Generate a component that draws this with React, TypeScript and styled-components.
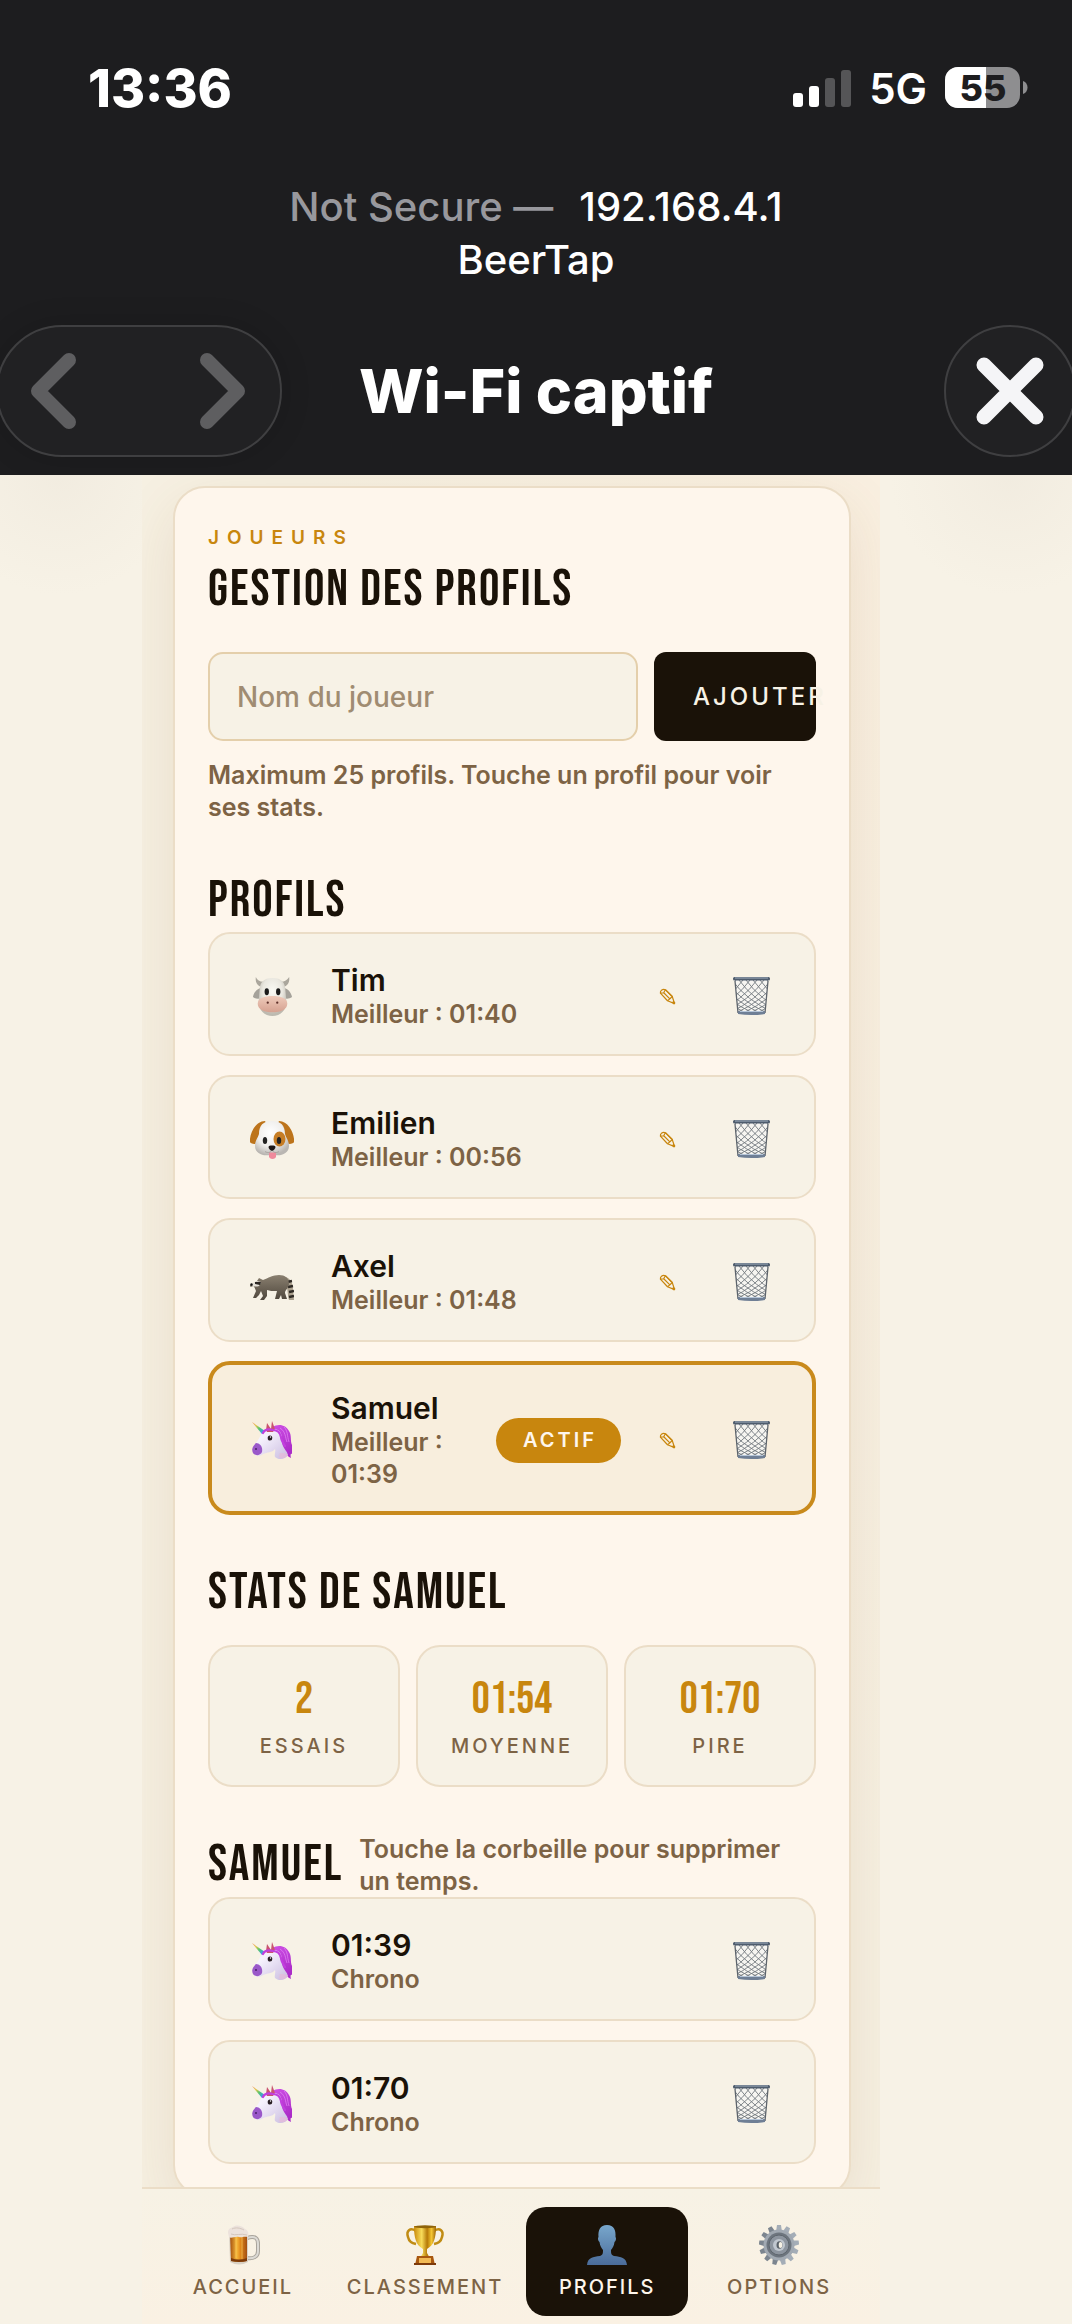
import React, { useState } from 'react';
import styled, { createGlobalStyle } from 'styled-components';

const GlobalStyle = createGlobalStyle`
  :root {
    --ink: #1a1208;
    --brown: #7d6345;
    --gold: #c8860e;
    --cream: #f7f2e6;
    --paper: #fef6ec;
    --line: #ebddc7;
    --chrome: #1d1d1f;
  }

  * {
    box-sizing: border-box;
  }

  body {
    margin: 0;
    background: var(--cream);
    color: var(--ink);
    font-family: Inter, 'Liberation Sans', sans-serif;
  }

  h1, h2, p, ul {
    margin: 0;
    padding: 0;
  }

  button {
    border: 0;
    background: none;
    padding: 0;
    font-family: inherit;
    cursor: pointer;
  }
`;

/* ---------- phone chrome ---------- */

const Chrome = styled.header`
  background: var(--chrome);
  color: #fff;
  padding: 58px 0 18px;
  overflow: hidden;
`;

const StatusBar = styled.div`
  display: flex;
  align-items: center;
  justify-content: space-between;
  height: 60px;
  padding: 0 44px 0 88px;
`;

const Clock = styled.time`
  font-size: 52px;
  font-weight: 800;
`;

const Indicators = styled.div`
  display: flex;
  align-items: center;
  gap: 18px;
  font-size: 42px;
  font-weight: 600;
`;

const Address = styled.div`
  margin-top: 62px;
  font-size: 40px;
  line-height: 53px;
  font-weight: 500;
  text-align: center;

  span {
    color: #98989d;
    margin-right: 26px;
  }
`;

const Toolbar = styled.div`
  display: grid;
  grid-template-columns: 286px 1fr 286px;
  align-items: center;
  margin: 39px -4px 0;
`;

const NavPill = styled.div`
  display: flex;
  align-items: center;
  justify-content: space-between;
  height: 132px;
  padding: 0 34px 0 32px;
  border: 2px solid #3f3f41;
  border-radius: 66px;
  background: #212123;
  box-shadow: 0 0 30px rgba(0, 0, 0, 0.15);

  button {
    display: flex;
  }
`;

const CloseButton = styled.button`
  display: flex;
  align-items: center;
  justify-content: center;
  justify-self: end;
  width: 132px;
  height: 132px;
  border: 2px solid #3f3f41;
  border-radius: 50%;
  background: #212123;
`;

const Title = styled.p`
  text-align: center;
  font-size: 61px;
  line-height: 80px;
  font-weight: 800;
  white-space: nowrap;
`;

/* ---------- page ---------- */

const Page = styled.div`
  padding-right: 50px;
  background:
    radial-gradient(circle 120px at 60px 0, rgba(238, 232, 220, 0.6), rgba(247, 242, 230, 0)),
    radial-gradient(circle 120px at calc(100% - 62px) 0, rgba(238, 232, 220, 0.6), rgba(247, 242, 230, 0));
`;

const Column = styled.div`
  width: 100%;
  max-width: 738px;
  margin: 0 auto;
  overflow: hidden;
  background: linear-gradient(to top right, #f6f0e2 60%, #f9efe0);
`;

const Card = styled.main`
  margin: 11px 29px 0 31px;
  padding: 38px 33px 31px;
  border: 2px solid var(--line);
  border-radius: 32px;
  background: var(--paper);
  box-shadow: 0 20px 60px rgba(139, 94, 30, 0.12);
`;

const Eyebrow = styled.p`
  font-size: 19px;
  line-height: 24px;
  font-weight: 600;
  letter-spacing: 8px;
  color: var(--gold);
  text-transform: uppercase;
`;

const displayFont = `'Bebas Neue', Oswald, 'Liberation Sans Narrow', sans-serif`;

const Heading = styled.h2`
  font-family: ${displayFont};
  font-size: 51px;
  line-height: 56px;
  font-weight: 400;
  letter-spacing: 2px;
  text-transform: uppercase;
  white-space: nowrap;
`;

const PageHeading = styled(Heading)`
  margin-top: 12px;
`;

const AddForm = styled.form`
  display: flex;
  gap: 16px;
  margin-top: 34px;
`;

const NameInput = styled.input`
  flex: 1;
  min-width: 0;
  height: 89px;
  padding: 0 27px;
  border: 2px solid #e4cfab;
  border-radius: 15px;
  background: var(--cream);
  color: var(--ink);
  font: 500 28px Inter, sans-serif;
  outline: none;

  &::placeholder {
    color: #a08c72;
    opacity: 1;
  }
`;

const AddButton = styled.button`
  width: 162px;
  height: 89px;
  padding-left: 39px;
  border-radius: 12px;
  background: var(--ink);
  color: var(--cream);
  font-size: 24px;
  font-weight: 500;
  letter-spacing: 3px;
  text-align: left;
  text-transform: uppercase;
`;

const Hint = styled.p`
  font-size: 25px;
  line-height: 32px;
  font-weight: 600;
  color: var(--brown);
`;

const FormHint = styled(Hint)`
  margin-top: 18px;
`;

const Section = styled.section`
  margin-top: 50px;
`;

const List = styled.ul`
  display: flex;
  flex-direction: column;
  gap: 19px;
  list-style: none;
`;

const ProfileList = styled(List)`
  margin-top: 3px;
`;

const Row = styled.li<{ $active?: boolean }>`
  display: flex;
  align-items: center;
  gap: 14px;
  padding: ${({ $active }) => ($active ? '25px 26px 21px 15px' : '28px 28px 24px 17px')};
  border: ${({ $active }) => ($active ? '4px solid #c98a1c' : '2px solid var(--line)')};
  border-radius: 22px;
  background: ${({ $active }) => ($active ? '#f8eedd' : 'var(--cream)')};
`;

const Avatar = styled.span`
  display: flex;
  justify-content: center;
  flex: 0 0 90px;
`;

const RowText = styled.div`
  flex: 1;
  min-width: 0;
`;

const RowTitle = styled.p`
  font-size: 30px;
  line-height: 36px;
  font-weight: 600;
`;

const Badge = styled.span`
  margin-right: -3px;
  padding: 0 24px 0 27px;
  border-radius: 23px;
  background: var(--gold);
  color: var(--paper);
  font-size: 20px;
  line-height: 45px;
  font-weight: 600;
  letter-spacing: 3px;
`;

const IconButton = styled.button`
  display: flex;
  align-items: center;
  justify-content: center;
  flex: 0 0 70px;
  height: 66px;
  color: var(--gold);
`;

const Stats = styled.div`
  display: grid;
  grid-template-columns: repeat(3, 1fr);
  gap: 16px;
  margin-top: 24px;
`;

const Stat = styled.div`
  display: flex;
  flex-direction: column;
  align-items: center;
  gap: 14px;
  padding: 33px 0 27px;
  border: 2px solid var(--line);
  border-radius: 24px;
  background: var(--cream);

  strong {
    font-family: ${displayFont};
    font-size: 45px;
    line-height: 40px;
    font-weight: 400;
    color: var(--gold);
  }

  span {
    font-size: 20px;
    line-height: 24px;
    font-weight: 550;
    letter-spacing: 3px;
    color: var(--brown);
    text-transform: uppercase;
  }
`;

const TimesSection = styled.section`
  margin-top: 46px;
`;

const TimesHeader = styled.div`
  display: flex;
  align-items: center;
  gap: 16px;
`;

/* ---------- bottom tabs ---------- */

const TabBar = styled.nav`
  position: relative;
  display: grid;
  grid-template-columns: 1fr auto 1fr 1fr;
  gap: 10px;
  margin-top: -10px;
  padding: 18px 20px 8px;
  border-top: 2px solid var(--line);
  background: linear-gradient(#f7f2e5, #faf1e3);
`;

const Tab = styled.a<{ $active?: boolean }>`
  display: flex;
  flex-direction: column;
  align-items: center;
  gap: 10px;
  padding: 18px 13px 17px;
  border-radius: 20px;
  background: ${({ $active }) => ($active ? 'var(--ink)' : 'transparent')};
  color: ${({ $active }) => ($active ? 'var(--paper)' : 'var(--brown)')};
  font-size: 20px;
  line-height: 24px;
  font-weight: 550;
  letter-spacing: 2px;
  text-decoration: none;
  text-transform: uppercase;
`;

/* ---------- icons ---------- */

const SignalIcon = () => (
  <svg width='58' height='37' viewBox='0 0 58 37' fill='#fff'>
    <rect x='0' y='23' width='10' height='14' rx='3' />
    <rect x='16' y='16' width='10' height='21' rx='3' />
    <rect x='32' y='8' width='10' height='29' rx='3' opacity='.25' />
    <rect x='48' y='0' width='10' height='37' rx='3' opacity='.25' />
  </svg>
);

const BatteryIcon = () => (
  <svg width='83' height='42' viewBox='0 0 83 42'>
    <clipPath id='cell'>
      <rect width='75' height='41' rx='13' />
    </clipPath>
    <g clipPath='url(#cell)'>
      <rect width='75' height='41' fill='#8e8e90' />
      <rect width='41' height='41' fill='#fff' />
    </g>
    <path d='M78 14c6 2 6 11 0 13z' fill='#8e8e90' />
    <text x='38' y='34' textAnchor='middle' fontFamily='Inter' fontWeight='800' fontSize='36' fill='#1d1d1f'>
      55
    </text>
  </svg>
);

const Chevron = ({ flip }: { flip?: boolean }) => (
  <svg width='46' height='76' viewBox='0 0 46 76'>
    <path
      d={flip ? 'M7 7L38 38L7 69' : 'M39 7L8 38L39 69'}
      fill='none'
      stroke='#5e5e60'
      strokeWidth='14'
      strokeLinecap='round'
      strokeLinejoin='round'
    />
  </svg>
);

const CloseIcon = () => (
  <svg width='68' height='68' viewBox='0 0 68 68'>
    <path d='M8 8L60 60M60 8L8 60' stroke='#f5f5f7' strokeWidth='15' strokeLinecap='round' />
  </svg>
);

const CowIcon = () => (
  <svg width='41' height='41' viewBox='1 2 43 43'>
    <defs>
      <radialGradient id='cowFace' cx='.5' cy='.35' r='.6'>
        <stop offset='0' stopColor='#fafaf5' />
        <stop offset='.6' stopColor='#e9e7df' />
        <stop offset='1' stopColor='#bdbab0' />
      </radialGradient>
      <linearGradient id='cowNose' x2='0' y2='1'>
        <stop offset='0' stopColor='#efcbbb' />
        <stop offset='1' stopColor='#d5a190' />
      </linearGradient>
    </defs>
    <path d='M5 3c-1 7 3 11 10 11l4-8C13 10 7 8 5 3zM40 3c1 7-3 11-10 11l-4-8c5 4 11 2 14-3z' fill='#aaa69c' />
    <path d='M13 14C8 14 3 18 2 24c4 3 9 2 11-1zM32 14c5 0 10 4 11 10-4 3-9 2-11-1z' fill='#a5a29a' />
    <path
      d='M22.500 4C13 4 9 9 9 17l-1 12c0 9 6 15 14.500 15S37 38 37 29l-1-12c0-8-4-13-13.500-13z'
      fill='url(#cowFace)'
    />
    <path d='M7 31c0-6 7-8 15.500-8S38 25 38 31s-7 9-15.500 9S7 37 7 31z' fill='url(#cowNose)' />
    <ellipse cx='16.500' cy='18.500' rx='2.300' ry='3.600' fill='#1b1b1b' />
    <ellipse cx='28.500' cy='18.500' rx='2.300' ry='3.600' fill='#1b1b1b' />
    <circle cx='17.500' cy='30' r='1.200' fill='#5d2f29' />
    <circle cx='27.500' cy='30' r='1.200' fill='#5d2f29' />
  </svg>
);

const DogIcon = () => (
  <svg width='44' height='39' viewBox='0 2 44 42' preserveAspectRatio='none'>
    <defs>
      <radialGradient id='dogFace' cx='.45' cy='.35' r='.65'>
        <stop offset='0' stopColor='#fff' />
        <stop offset='.6' stopColor='#efeeec' />
        <stop offset='1' stopColor='#b9b6b2' />
      </radialGradient>
    </defs>
    <path d='M15 3C5 3-1 18 0 26c3 3 7 2 9-1l8-18zM29 3c10 0 16 15 15 23-3 3-7 2-9-1L27 7z' fill='#bd741b' />
    <path
      d='M22 3C13 3 9 8 9 17c-1 4-4 7-4 13 0 7 6 10 11 10h12c5 0 11-3 11-10 0-6-3-9-4-13C35 8 31 3 22 3z'
      fill='url(#dogFace)'
    />
    <ellipse cx='29.500' cy='22.500' rx='6' ry='8' fill='#c67d25' />
    <ellipse cx='15' cy='24' rx='2.200' ry='3.800' fill='#222' />
    <ellipse cx='29' cy='24' rx='2.200' ry='3.800' fill='#222' />
    <path d='M19 37h7v4c0 4-7 4-7 0z' fill='#ef8a9c' />
    <path d='M15 36c3 2 6 1 7-2 1 3 4 4 7 2' fill='none' stroke='#a09a95' strokeWidth='.8' />
    <path d='M18.500 31c0-2 7-2 7 0 0 2-2 4-3.500 4s-3.500-2-3.500-4z' fill='#1c1717' />
  </svg>
);

const RaccoonIcon = () => (
  <svg width='44' height='44' viewBox='0 2 44 44'>
    <defs>
      <linearGradient id='fur' x2='0' y2='1'>
        <stop offset='0' stopColor='#8a8070' />
        <stop offset='1' stopColor='#4f473d' />
      </linearGradient>
    </defs>
    <path d='M36 19c5 2 7 7 7 13l1 10h-5c-2-5 0-12-5-18z' fill='#aaa08e' />
    <path d='M37 24l5-1M38 29l5-1M39 34l5-1M39 39l5-1' stroke='#2f2a25' strokeWidth='2.400' />
    <path
      d='M1 27l6-4 2-3 4 2c5-2 10-5 16-5 6 0 10 3 10 9-1 5-4 6-4 9l2 6h-5l-1-4-2 4h-4l2-8c-5 0-7 0-10-1l0 6-3 4h-4l3-4-2-5-2 4-3 3h-3l3-7c-1-3-2-5-3-5-1 1-4 1-5-1z'
      fill='url(#fur)'
    />
    <path d='M1 26l6-3 4 1-2 4c-3 1-6 1-8-2z' fill='#e5e1d8' />
    <path d='M5 24h6l-1 3-5-1z' fill='#2b2622' />
    <circle cx='1.500' cy='26.500' r='1.200' fill='#111' />
  </svg>
);

const UnicornIcon = () => (
  <svg width='41' height='39' viewBox='0 0 41 39'>
    <defs>
      <linearGradient id='horn' x2='1' y2='1'>
        <stop offset='0' stopColor='#ef8b5c' />
        <stop offset='.3' stopColor='#e3c64c' />
        <stop offset='.55' stopColor='#58c46c' />
        <stop offset='.8' stopColor='#3f9fe0' />
        <stop offset='1' stopColor='#6b6be0' />
      </linearGradient>
      <linearGradient id='coat' x2='1' y2='1'>
        <stop offset='.3' stopColor='#f6f2fd' />
        <stop offset='1' stopColor='#c9bbdf' />
      </linearGradient>
      <linearGradient id='mane' x2='.4' y2='1'>
        <stop offset='0' stopColor='#cf50e6' />
        <stop offset='1' stopColor='#ab2cc8' />
      </linearGradient>
    </defs>
    <path d='M20 6c7-4 14-2 17 4 3 5 1 9 3 14v9c-1-1-2 0-1 4-3-1-4-3-5-5L24 18z' fill='url(#mane)' />
    <path
      d='M11 11c4-5 13-5 17 0 3 4 1 9 3 14 1 3 4 5 5 9-3 5-10 5-13 2-1-3 1-5 0-8-3 4-8 3-12 5-3 3-8 2-10-2-1-3 0-6 3-9 3-4 4-7 7-11z'
      fill='url(#coat)'
    />
    <path d='M4 22c4 0 7 4 6 9-2 4-7 4-9 1-2-4 0-7 3-10z' fill='#9a58c9' />
    <circle cx='4' cy='28' r='1' fill='#4a2068' />
    <path d='M0 1L13 10L10 13z' fill='url(#horn)' />
    <path d='M14 9L15 2L19 8L20 0L23 8L21 11L15 11z' fill='#c9536f' />
    <path d='M11 12c2-4 6-4 10-3 4 0 7 2 8 7 0 3 2 6 4 9' fill='none' stroke='#c23fde' strokeWidth='2.200' strokeLinecap='round' />
    <path d='M28 7c6 4 5 9 7 14M32 6c4 4 3 9 5 15' fill='none' stroke='#e48af5' strokeWidth='.7' />
    <ellipse cx='18' cy='17' rx='2.300' ry='2.600' fill='#281d23' />
    <circle cx='18.500' cy='16' r='.7' fill='#fff' />
    <path d='M28 32c3 0 6 0 8 2-3 4-7 4-9 2z' fill='#e7bbd8' opacity='.7' />
  </svg>
);

const TrashIcon = () => (
  <svg width='37' height='38' viewBox='0 0 37 38'>
    <clipPath id='basket'>
      <path d='M2 3H35L32 36H5z' />
    </clipPath>
    <path d='M2 3H35L32 36H5z' fill='#f6f5f1' />
    <g clipPath='url(#basket)' stroke='#73797f' strokeWidth='.9' fill='none'>
      {[-36, -29, -22, -15, -8, -1, 6, 13, 20, 27, 34].map((x) => (
        <path key={x} d={`M${x} 3q14 20 42 33M${37 - x} 3q-14 20-42 33`} />
      ))}
    </g>
    <path d='M2 4L5 36M35 4L32 36' stroke='#5d646c' strokeWidth='1.300' />
    <path d='M5 34Q18 36 32 34V37Q18 39 5 37z' fill='#6f7f95' />
    <path d='M7 34.500H30' stroke='#b5c5d8' />
    <rect x='0' y='0' width='37' height='3.500' rx='1.500' fill='#4e5c6d' />
    <path d='M2 1H35' stroke='#a4b2c2' />
  </svg>
);

const PencilIcon = () => (
  <svg width='17' height='17' viewBox='0 0 18 18' fill='none' stroke='currentColor' strokeWidth='1.300' strokeLinejoin='round'>
    <path d='M1.500 5.500C1 2.500 4 .5 7 2L14 9L16.500 16.500L9 13.500z' />
    <path d='M5 5L11.500 11.500M7 2L14 9L11.500 11.500L9 13.500M1.500 5.500C3 5.500 5 5 5 5C5.500 4 6 3 7 2' />
    <path d='M14.500 14.500L16.500 16.500' strokeWidth='2.500' />
  </svg>
);

const BeerIcon = () => (
  <svg width='40' height='40' viewBox='0 0 40 40'>
    <defs>
      <linearGradient id='beer'>
        <stop offset='0' stopColor='#a5500f' />
        <stop offset='.4' stopColor='#f6b73a' />
        <stop offset='.6' stopColor='#e38b1c' />
        <stop offset='1' stopColor='#a34f12' />
      </linearGradient>
    </defs>
    <path d='M24 13c9-3 11 1 11 6v7c0 6-5 8-11 7' fill='none' stroke='#a9a49c' strokeWidth='4' />
    <path d='M24 13c9-3 11 1 11 6v7c0 6-5 8-11 7' fill='none' stroke='#dcdad5' strokeWidth='2' />
    <path d='M6 8H25V37Q16 42 7 37z' fill='#d9d1c5' />
    <path d='M7 9H24V36Q16 38 8 36z' fill='url(#beer)' />
    <path d='M8 33Q16 36 24 33V36Q16 38 8 36z' fill='#7c3a0a' />
    <path d='M13 12V33M19 12V34' stroke='#ffd568' opacity='.6' />
    <path d='M5 8C5 3 8 3 10 2c4-3 9-1 12 2 3 1 4 4 3 8-5-1-6 1-9 0-4-1-8 2-10 0z' fill='#ece2dc' />
    <path d='M8 9c4 2 10-1 16 1M9 4c4-2 8-1 12 1' fill='none' stroke='#d4c7bd' />
  </svg>
);

const TrophyIcon = () => (
  <svg width='40' height='40' viewBox='0 0 40 40'>
    <defs>
      <linearGradient id='gold'>
        <stop offset='0' stopColor='#c98a0c' />
        <stop offset='.35' stopColor='#f8dc5a' />
        <stop offset='.6' stopColor='#b67a08' />
        <stop offset='.8' stopColor='#f5c633' />
        <stop offset='1' stopColor='#9c6204' />
      </linearGradient>
    </defs>
    <path
      d='M11 6C5 2 1 6 3 12c1 5 4 6 8 7M29 6c6-4 10 0 8 6-1 5-4 6-8 7'
      fill='none'
      stroke='#c08c14'
      strokeWidth='2.500'
    />
    <path d='M9 1H31C31 13 29 20 22 24V28L25 33H15L18 28V24C11 20 9 13 9 1z' fill='url(#gold)' />
    <ellipse cx='20' cy='1.800' rx='11' ry='1.500' fill='#8f6308' />
    <path d='M12 31H28L30 40H10z' fill='#a8570f' />
    <path d='M14 33H26V38H14z' fill='#f2ba55' />
    <path d='M9 39H31' stroke='#7d3a0a' strokeWidth='2' />
  </svg>
);

const BustIcon = () => (
  <svg width='40' height='40' viewBox='0 0 40 40'>
    <defs>
      <linearGradient id='bust' x2='0' y2='1'>
        <stop offset='0' stopColor='#78a7cc' />
        <stop offset='1' stopColor='#4b6c9a' />
      </linearGradient>
    </defs>
    <path
      d='M20 0C13 0 11 5 11.500 12c-1 1-.5 4 1 5 .5 4 2 6 3.500 8 0 3 0 5-3 6-7 1-12 1-13 9H40c-1-8-6-8-13-9-3-1-3-3-3-6 1.500-2 3-4 3.500-8 1.500-1 2-4 1-5C29 5 27 0 20 0z'
      fill='url(#bust)'
    />
  </svg>
);

const GearIcon = () => (
  <svg width='40' height='40' viewBox='0 0 40 40'>
    <g transform='translate(20 20)'>
      {Array.from({ length: 13 }, (_, i) => (
        <path
          key={i}
          d='M-3 -13L-2 -20H2L3 -13z'
          fill={i > 6 ? '#7c858f' : '#a4adb7'}
          transform={`rotate(${(i * 360) / 13})`}
        />
      ))}
      <circle r='15.500' fill='#a1a9b2' />
      <circle r='12.500' fill='#6d757e' />
      <circle r='10' fill='#8d959f' stroke='#5f676f' />
      <circle r='6' fill='#c0c7cf' />
      <ellipse cx='.5' rx='3' ry='3.800' fill='#5b6269' />
      <ellipse cx='1.500' rx='1.800' ry='3' fill='#f7f2e6' />
    </g>
  </svg>
);

/* ---------- data ---------- */

const profiles = [
  { name: 'Tim', best: '01:40', icon: <CowIcon /> },
  { name: 'Emilien', best: '00:56', icon: <DogIcon /> },
  { name: 'Axel', best: '01:48', icon: <RaccoonIcon /> },
  { name: 'Samuel', best: '01:39', icon: <UnicornIcon />, active: true },
];

const stats = [
  { value: '2', label: 'Essais' },
  { value: '01:54', label: 'Moyenne' },
  { value: '01:70', label: 'Pire' },
];

const times = ['01:39', '01:70'];

const tabs = [
  { label: 'Accueil', icon: <BeerIcon /> },
  { label: 'Classement', icon: <TrophyIcon /> },
  { label: 'Profils', icon: <BustIcon />, active: true },
  { label: 'Options', icon: <GearIcon /> },
];

export default function App() {
  const [name, setName] = useState('');

  return (
    <>
      <GlobalStyle />
      <Chrome>
        <StatusBar>
          <Clock>13:36</Clock>
          <Indicators>
            <SignalIcon />
            5G
            <BatteryIcon />
          </Indicators>
        </StatusBar>
        <Address>
          <p>
            <span>Not Secure —</span>192.168.4.1
          </p>
          <p>BeerTap</p>
        </Address>
        <Toolbar>
          <NavPill>
            <button type='button' aria-label='Back'>
              <Chevron />
            </button>
            <button type='button' aria-label='Forward'>
              <Chevron flip />
            </button>
          </NavPill>
          <Title>Wi-Fi captif</Title>
          <CloseButton type='button' aria-label='Close'>
            <CloseIcon />
          </CloseButton>
        </Toolbar>
      </Chrome>

      <Page>
        <Column>
          <Card>
            <Eyebrow>Joueurs</Eyebrow>
            <PageHeading as='h1'>Gestion des profils</PageHeading>
            <AddForm onSubmit={(e) => e.preventDefault()}>
              <NameInput
                aria-label='Nom du joueur'
                placeholder='Nom du joueur'
                value={name}
                onChange={(e) => setName(e.target.value)}
              />
              <AddButton type='submit'>Ajouter</AddButton>
            </AddForm>
            <FormHint>Maximum 25 profils. Touche un profil pour voir ses stats.</FormHint>

            <Section>
              <Heading>Profils</Heading>
              <ProfileList>
                {profiles.map((p) => (
                  <Row key={p.name} $active={p.active}>
                    <Avatar>{p.icon}</Avatar>
                    <RowText>
                      <RowTitle>{p.name}</RowTitle>
                      <Hint>Meilleur : {p.best}</Hint>
                    </RowText>
                    {p.active && <Badge>ACTIF</Badge>}
                    <IconButton type='button' aria-label={`Modifier ${p.name}`}>
                      <PencilIcon />
                    </IconButton>
                    <IconButton type='button' aria-label={`Supprimer ${p.name}`}>
                      <TrashIcon />
                    </IconButton>
                  </Row>
                ))}
              </ProfileList>
            </Section>

            <Section>
              <Heading>Stats de Samuel</Heading>
              <Stats>
                {stats.map((s) => (
                  <Stat key={s.label}>
                    <strong>{s.value}</strong>
                    <span>{s.label}</span>
                  </Stat>
                ))}
              </Stats>
            </Section>

            <TimesSection>
              <TimesHeader>
                <Heading>Samuel</Heading>
                <Hint>Touche la corbeille pour supprimer un temps.</Hint>
              </TimesHeader>
              <List>
                {times.map((time) => (
                  <Row key={time}>
                    <Avatar>
                      <UnicornIcon />
                    </Avatar>
                    <RowText>
                      <RowTitle>{time}</RowTitle>
                      <Hint>Chrono</Hint>
                    </RowText>
                    <IconButton type='button' aria-label={`Supprimer ${time}`}>
                      <TrashIcon />
                    </IconButton>
                  </Row>
                ))}
              </List>
            </TimesSection>
          </Card>

          <TabBar>
            {tabs.map((t) => (
              <Tab key={t.label} href='#' $active={t.active}>
                {t.icon}
                {t.label}
              </Tab>
            ))}
          </TabBar>
        </Column>
      </Page>
    </>
  );
}
